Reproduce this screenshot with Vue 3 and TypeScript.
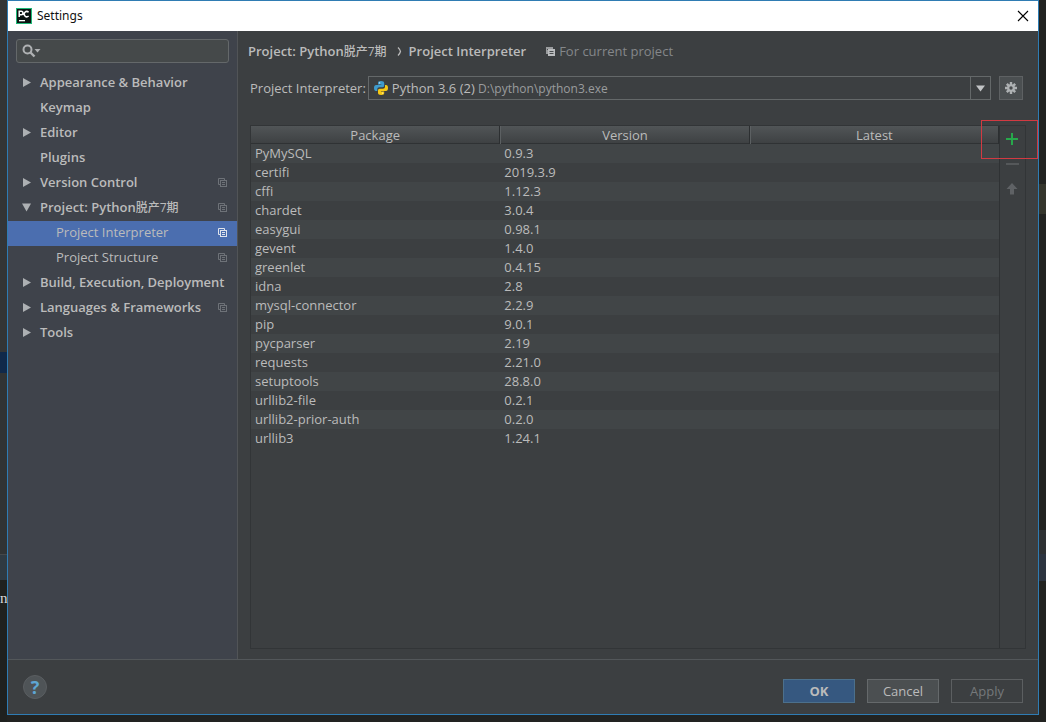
<script setup lang="ts">
import { ref } from 'vue'

interface TreeItem {
  label: string
  cjk?: string
  arrow?: 'right' | 'down'
  child?: boolean
  scoped?: boolean
}

interface Pkg {
  name: string
  version: string
}

const items: TreeItem[] = [
  { label: 'Appearance & Behavior', arrow: 'right' },
  { label: 'Keymap' },
  { label: 'Editor', arrow: 'right' },
  { label: 'Plugins' },
  { label: 'Version Control', arrow: 'right', scoped: true },
  { label: 'Project: Python', cjk: '脱产7期', arrow: 'down', scoped: true },
  { label: 'Project Interpreter', child: true, scoped: true },
  { label: 'Project Structure', child: true, scoped: true },
  { label: 'Build, Execution, Deployment', arrow: 'right' },
  { label: 'Languages & Frameworks', arrow: 'right', scoped: true },
  { label: 'Tools', arrow: 'right' },
]

const selected = ref('Project Interpreter')
const query = ref('')

const packages: Pkg[] = [
  { name: 'PyMySQL', version: '0.9.3' },
  { name: 'certifi', version: '2019.3.9' },
  { name: 'cffi', version: '1.12.3' },
  { name: 'chardet', version: '3.0.4' },
  { name: 'easygui', version: '0.98.1' },
  { name: 'gevent', version: '1.4.0' },
  { name: 'greenlet', version: '0.4.15' },
  { name: 'idna', version: '2.8' },
  { name: 'mysql-connector', version: '2.2.9' },
  { name: 'pip', version: '9.0.1' },
  { name: 'pycparser', version: '2.19' },
  { name: 'requests', version: '2.21.0' },
  { name: 'setuptools', version: '28.8.0' },
  { name: 'urllib2-file', version: '0.2.1' },
  { name: 'urllib2-prior-auth', version: '0.2.0' },
  { name: 'urllib3', version: '1.24.1' },
]
</script>

<template>
  <div class="desktop">
    <div class="edge edge-left"><span class="stray">n</span></div>
    <div class="edge edge-right"></div>
    <div class="window">
      <header class="titlebar">
        <svg class="app-icon" width="16" height="16" viewBox="0 0 16 16">
          <rect width="16" height="16" fill="#1fb877" />
          <rect x="1" y="1" width="14" height="14" fill="#0b1512" />
          <path d="M3.2 9V3.2h2a1.7 1.7 0 0 1 0 3.5h-2M12.6 4.2a2.6 2.6 0 1 0 0 3.8" fill="none" stroke="#fff" stroke-width="1.5" />
          <rect x="3" y="12" width="6" height="1.3" fill="#fff" />
        </svg>
        <h1>Settings</h1>
        <button class="close" type="button" aria-label="Close">
          <svg width="12" height="12" viewBox="0 0 12 12"><path d="M1 1l10 10M11 1L1 11" stroke="#000" stroke-width="1.1" /></svg>
        </button>
      </header>

      <div class="body">
        <nav class="sidebar">
          <label class="search">
            <svg width="20" height="14" viewBox="0 0 20 14">
              <circle cx="5.500" cy="5.500" r="4" fill="none" stroke="#afb1b3" stroke-width="2" />
              <path d="M8.500 8.500l4 4" stroke="#afb1b3" stroke-width="2.400" />
              <path d="M12.500 5h6l-3 3.500z" fill="#afb1b3" />
            </svg>
            <input v-model="query" type="text" aria-label="Search settings" />
          </label>
          <ul class="tree">
            <li v-for="item in items" :key="item.label">
              <button
                type="button"
                class="node"
                :class="{ child: item.child, selected: item.label === selected }"
                @click="selected = item.label"
              >
                <span class="twist">
                  <svg v-if="item.arrow === 'right'" width="9" height="9" viewBox="0 0 9 9"><path d="M1 0l8 4.500L1 9z" fill="#adb0b3" /></svg>
                  <svg v-else-if="item.arrow === 'down'" width="9" height="9" viewBox="0 0 9 9"><path d="M0 .5h9L4.500 8.500z" fill="#adb0b3" /></svg>
                </span>
                <span class="name">{{ item.label }}<span v-if="item.cjk" class="cjk">{{ item.cjk }}</span></span>
                <svg v-if="item.scoped" class="scope" width="9" height="9" viewBox="0 0 9 9" fill="none" stroke="currentColor">
                  <path d="M2 6.500H.5v-6h6V2" />
                  <rect x="2.500" y="2.500" width="6" height="6" />
                  <path d="M4 4.500h3M4 6.500h3" />
                </svg>
              </button>
            </li>
          </ul>
        </nav>

        <main class="content">
          <div class="crumbs">
            <b>Project: Python<span class="cjk">脱产7期</span></b>
            <svg class="chevron" width="5" height="9" viewBox="0 0 5 9"><path d="M1 .5q2 2 2.500 4q-.5 2-2.500 4" fill="none" stroke="#bbb" stroke-width="1.2" /></svg>
            <b>Project Interpreter</b>
            <svg class="current" width="9" height="9" viewBox="0 0 9 9">
              <path d="M0 0h7v2H2v5H0z" fill="#9a9c9e" />
              <rect x="2" y="2" width="7" height="7" fill="#bbbdbf" />
              <path d="M3.500 4.500h4M3.500 6.500h4M1 2.500h1" stroke="#4a4d4f" />
            </svg>
            <span class="hint">For current project</span>
          </div>

          <div class="interp">
            <span id="interp-label">Project Interpreter:</span>
            <button class="combo" type="button" aria-haspopup="listbox" aria-labelledby="interp-label interp-value">
              <svg width="14" height="14" viewBox="0 0 14 14">
                <path d="M7 0C4.500 0 4 .9 4 2v1.500h3.300V4H2.200C.8 4 0 5.200 0 7s.8 3 2 3h1.300V8.300c0-1.200.9-2 2-2h3.200c1 0 1.700-.8 1.700-1.700V2C10.200.8 9.200 0 7 0z" fill="#3f9bcd" />
                <path d="M7.200 14c2.500 0 3-.9 3-2v-1.500H6.900V10H12c1.300 0 2-1.200 2-3s-.7-3-2-3h-1v1.700c0 1.200-.9 2-2 2H5.700C4.700 7.700 4 8.500 4 9.400V12c0 1.200 1 2 3.200 2z" fill="#f5c816" />
                <circle cx="5.600" cy="1.900" r=".7" fill="#dcebf3" />
                <circle cx="8.600" cy="12.100" r=".7" fill="#fff3b8" />
              </svg>
              <span id="interp-value" class="value">Python 3.6 (2) <small>D:\python\python3.exe</small></span>
              <span class="drop"><svg width="9" height="7" viewBox="0 0 9 7"><path d="M0 .5h9L4.500 6.500z" fill="#c2c4c6" /></svg></span>
            </button>
            <button class="gear" type="button" aria-label="Interpreter options">
              <svg width="12" height="12" viewBox="0 0 12 12">
                <g stroke="#aeb1b3" stroke-width="2.400">
                  <path d="M6 0v12M0 6h12M1.800 1.800l8.400 8.400M10.200 1.800l-8.400 8.400" />
                </g>
                <circle cx="6" cy="6" r="3.800" fill="#aeb1b3" />
                <circle cx="6" cy="6" r="1.700" fill="#4a4d4f" />
              </svg>
            </button>
          </div>

          <section class="packages">
            <div class="list">
              <table>
                <thead>
                  <tr><th>Package</th><th>Version</th><th>Latest</th></tr>
                </thead>
                <tbody>
                  <tr v-for="p in packages" :key="p.name">
                    <td>{{ p.name }}</td>
                    <td>{{ p.version }}</td>
                    <td></td>
                  </tr>
                </tbody>
              </table>
            </div>
            <div class="tools">
              <button type="button" aria-label="Install">
                <svg width="13" height="13" viewBox="0 0 13 13"><path d="M6 1v12M0 7h12" stroke="#27a84b" stroke-width="2" /></svg>
              </button>
              <button type="button" aria-label="Uninstall">
                <svg width="13" height="13" viewBox="0 0 13 13"><path d="M0 7h13" stroke="#55585a" stroke-width="2" /></svg>
              </button>
              <button type="button" aria-label="Upgrade">
                <svg width="13" height="13" viewBox="0 0 13 13"><path d="M6 1L11.500 7H8v5.500H4V7H.5z" fill="#5f6265" /></svg>
              </button>
              <div class="marker"></div>
            </div>
          </section>
        </main>
      </div>

      <footer class="footer">
        <button class="help" type="button" aria-label="Help">?</button>
        <div class="actions">
          <button class="primary" type="button">OK</button>
          <button type="button">Cancel</button>
          <button type="button" disabled>Apply</button>
        </div>
      </footer>
    </div>
  </div>
</template>

<style>
body {
  margin: 0;
  background: #222321;
}
</style>

<style scoped>
* {
  box-sizing: border-box;
}

.desktop {
  position: relative;
  display: flex;
  min-height: 100vh;
  padding: 0 7px 7px;
  background: #222321;
  color: #bbbbbb;
  font: 13px/19px "Open Sans", "Noto Sans CJK SC", sans-serif;
}

button,
input {
  margin: 0;
  padding: 0;
  border: 0;
  background: none;
  color: inherit;
  font: inherit;
}

b {
  font-weight: 600;
}

svg {
  display: block;
  flex: none;
}

.cjk {
  font-size: 12px;
  font-weight: 500;
  line-height: 16px;
}

.edge {
  position: absolute;
  top: 0;
  bottom: 0;
  width: 7px;
}

.edge-left {
  left: 0;
  background: linear-gradient(#333536 0 352px, #10294a 352px 373px, #303334 373px 554px, #45484a 554px 555px, #2f3a42 555px 580px, #1f211f 580px);
}

.edge-right {
  right: 0;
  background: linear-gradient(#222321 0 184px, #34352c 184px 214px, #222321 214px 530px, #2e3133 530px 554px, #2c3440 554px 581px, #222321 581px);
}

.stray {
  position: absolute;
  top: 588px;
  left: 0;
  color: #d8d8d8;
  font: 15px/20px "Liberation Serif", serif;
}

.window {
  display: flex;
  flex: 1;
  flex-direction: column;
  min-width: 0;
  border: 1px solid #2f7cb3;
  background: #3c3f41;
}

.titlebar {
  display: flex;
  align-items: center;
  height: 30px;
  padding: 0 9px 0 8px;
  background: #fff;
  color: #111;
}

.titlebar h1 {
  flex: 1;
  margin: 0 0 0 5px;
  font: 12px/18px "Noto Sans", sans-serif;
}

.body {
  display: flex;
  flex: 1;
}

.sidebar {
  width: 230px;
  padding-top: 8px;
  border-right: 1px solid #515457;
  background: #3f434b;
}

.search {
  display: flex;
  align-items: center;
  height: 24px;
  margin: 0 8px;
  padding-left: 5px;
  border: 1px solid #64686a;
  border-radius: 3px;
  background: #45494a;
}

.search input {
  flex: 1;
  min-width: 0;
  outline: 0;
}

.tree {
  margin: 8px 0 0;
  padding: 0;
  list-style: none;
}

.node {
  display: flex;
  align-items: center;
  width: 100%;
  height: 25px;
  padding: 0 10px 2px 14px;
  font-weight: 600;
  text-align: left;
}

.twist {
  flex: none;
  width: 18px;
}

.name {
  flex: 1;
  white-space: nowrap;
}

.child {
  font-weight: 400;
}

.child .name {
  padding-left: 16px;
}

.scope {
  color: #6e7278;
}

.selected {
  background: #4b6eaf;
}

.selected .scope {
  color: #e0e4ec;
}

.content {
  display: flex;
  flex: 1;
  flex-direction: column;
  min-width: 0;
  padding: 11px 12px 10px;
}

.crumbs {
  display: flex;
  align-items: center;
  height: 19px;
  margin-left: -2px;
}

.chevron {
  margin: 0 7px 0 10px;
}

.current {
  margin: 0 4px 0 20px;
}

.hint {
  color: #84878a;
}

.interp {
  display: flex;
  align-items: center;
  margin: 15px 3px 0 0;
}

.combo {
  display: flex;
  flex: 1;
  align-items: center;
  height: 24px;
  margin: 0 8px 0 2px;
  padding-left: 5px;
  border: 1px solid #646869;
  text-align: left;
}

.value {
  flex: 1;
  margin-left: 4px;
}

.value small {
  color: #9a9c9e;
  font-size: 12px;
}

.drop {
  display: flex;
  align-items: center;
  justify-content: center;
  width: 20px;
  height: 22px;
  border-left: 1px solid #646869;
}

.gear {
  display: flex;
  align-items: center;
  justify-content: center;
  width: 24px;
  height: 24px;
  border: 1px solid #5e6163;
  background: #4b4f51;
}

.packages {
  display: flex;
  flex: 1;
  margin-top: 25px;
  border: 1px solid #323537;
}

.list {
  flex: 1;
  border-right: 1px solid #2f3234;
}

table {
  width: 100%;
  border-collapse: separate;
  border-spacing: 0;
  table-layout: fixed;
}

th {
  height: 18px;
  padding: 1px 0 0;
  border-right: 1px solid #2c2f31;
  background: linear-gradient(#515557, #3d4042);
  box-shadow: inset 0 -1px #2f3234;
  font-weight: 400;
  line-height: 17px;
}

th + th {
  border-left: 1px solid #5c6062;
}

td {
  height: 19px;
  padding: 0 4px;
  line-height: 19px;
}

tbody tr:nth-child(odd) {
  background: #414547;
}

.tools {
  position: relative;
  display: flex;
  flex-direction: column;
  width: 25px;
}

.tools button {
  display: flex;
  align-items: center;
  justify-content: center;
  width: 25px;
  height: 25px;
}

.marker {
  position: absolute;
  top: -6px;
  left: -19px;
  width: 57px;
  height: 39px;
  border: 1px solid #d23a42;
  pointer-events: none;
}

.footer {
  display: flex;
  align-items: center;
  justify-content: space-between;
  height: 55px;
  padding: 8px 15px 0;
  border-top: 1px solid #53575a;
}

.help {
  width: 24px;
  height: 24px;
  margin-bottom: 8px;
  border: 1px solid #5a5e61;
  border-radius: 50%;
  background: #4f5457;
  color: #5ea6d4;
  font-size: 18px;
  font-weight: 700;
  line-height: 20px;
}

.actions {
  display: flex;
  gap: 12px;
}

.actions button {
  width: 72px;
  height: 24px;
  border: 1px solid #65696b;
  background: #4b4f51;
}

.actions .primary {
  border-color: #4c708c;
  background: #365880;
  font-weight: 700;
}

.actions button:disabled {
  border-color: #5c5f61;
  background: none;
  color: #76797b;
}
</style>
